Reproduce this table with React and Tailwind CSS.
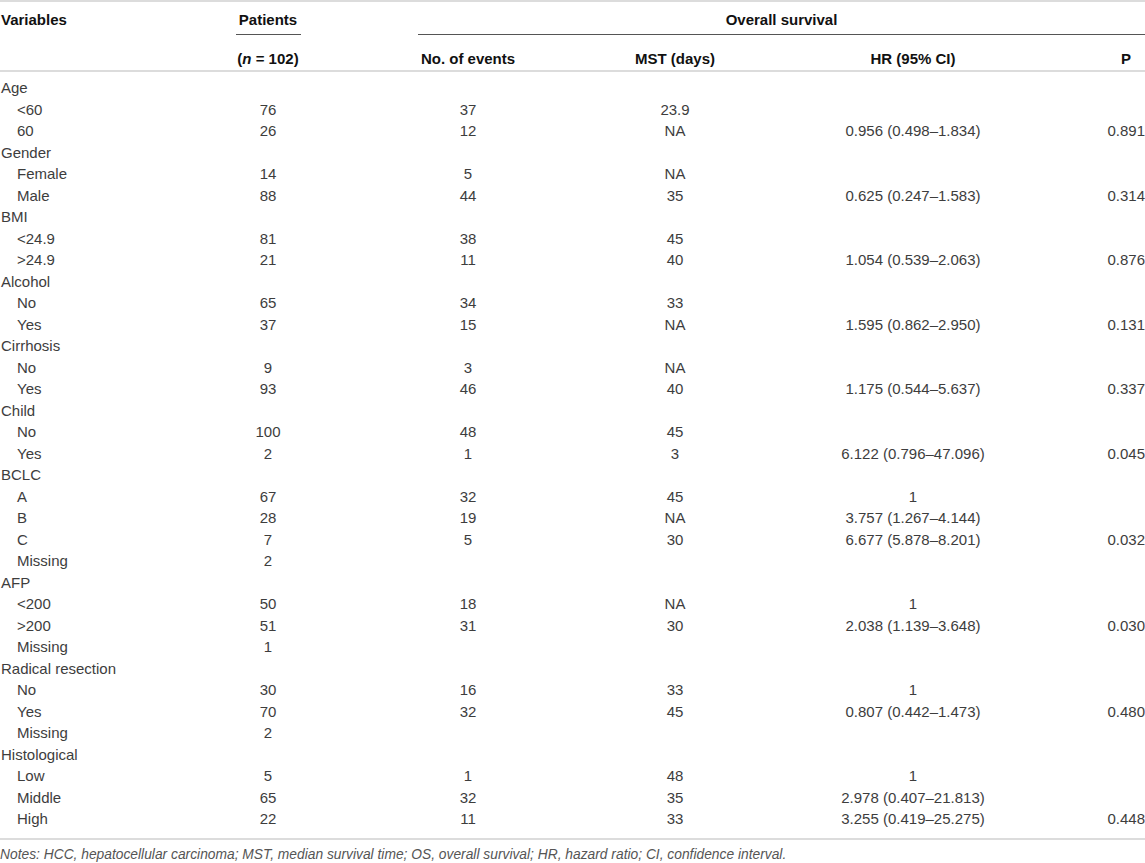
import React from 'react';

const cols = 'grid grid-cols-[220px_96px_304px_110px_366px_49px]';

const rows = [
  ['Age', 0],
  ['<60', 1, '76', '37', '23.9', '', ''],
  ['60', 1, '26', '12', 'NA', '0.956 (0.498–1.834)', '0.891'],
  ['Gender', 0],
  ['Female', 1, '14', '5', 'NA', '', ''],
  ['Male', 1, '88', '44', '35', '0.625 (0.247–1.583)', '0.314'],
  ['BMI', 0],
  ['<24.9', 1, '81', '38', '45', '', ''],
  ['>24.9', 1, '21', '11', '40', '1.054 (0.539–2.063)', '0.876'],
  ['Alcohol', 0],
  ['No', 1, '65', '34', '33', '', ''],
  ['Yes', 1, '37', '15', 'NA', '1.595 (0.862–2.950)', '0.131'],
  ['Cirrhosis', 0],
  ['No', 1, '9', '3', 'NA', '', ''],
  ['Yes', 1, '93', '46', '40', '1.175 (0.544–5.637)', '0.337'],
  ['Child', 0],
  ['No', 1, '100', '48', '45', '', ''],
  ['Yes', 1, '2', '1', '3', '6.122 (0.796–47.096)', '0.045'],
  ['BCLC', 0],
  ['A', 1, '67', '32', '45', '1', ''],
  ['B', 1, '28', '19', 'NA', '3.757 (1.267–4.144)', ''],
  ['C', 1, '7', '5', '30', '6.677 (5.878–8.201)', '0.032'],
  ['Missing', 1, '2', '', '', '', ''],
  ['AFP', 0],
  ['<200', 1, '50', '18', 'NA', '1', ''],
  ['>200', 1, '51', '31', '30', '2.038 (1.139–3.648)', '0.030'],
  ['Missing', 1, '1', '', '', '', ''],
  ['Radical resection', 0],
  ['No', 1, '30', '16', '33', '1', ''],
  ['Yes', 1, '70', '32', '45', '0.807 (0.442–1.473)', '0.480'],
  ['Missing', 1, '2', '', '', '', ''],
  ['Histological', 0],
  ['Low', 1, '5', '1', '48', '1', ''],
  ['Middle', 1, '65', '32', '35', '2.978 (0.407–21.813)', ''],
  ['High', 1, '22', '11', '33', '3.255 (0.419–25.275)', '0.448'],
];

export default function App() {
  return (
    <div className="w-[1145px] bg-white font-['Liberation_Sans',Arial,sans-serif] text-[15px] text-[#3d3d3d]">
      {/* header */}
      <div className="border-t-2 border-[#dcdcdc]">
        <div className={`${cols} font-bold text-[#111] leading-[18px]`}>
          <div className="pt-[9px] pb-[6px] pl-px">Variables</div>
          <div className="pt-[9px]">
            <div className="w-[65px] mx-auto text-center pb-[5px] border-b border-[#555]">Patients</div>
          </div>
          <div className="col-span-4 ml-[102px] pt-[9px] pb-[5px] text-center border-b border-[#555]">
            Overall survival
          </div>
        </div>
        <div className={`${cols} font-bold text-[#111] leading-[18px] pt-[15px] pb-[2px] border-b-2 border-[#dcdcdc] whitespace-nowrap`}>
          <div></div>
          <div className="text-center">
            (<span className="italic">n</span> = 102)
          </div>
          <div className="text-center">No. of events</div>
          <div className="text-center">MST (days)</div>
          <div className="text-center">HR (95% CI)</div>
          <div className="text-right pr-[14px]">P</div>
        </div>
      </div>

      {/* body */}
      <div className="pt-[5px] pb-[8px] border-b-2 border-[#dcdcdc] leading-[21.5px]">
        {rows.map((r, i) => (
          <div key={i} className={`${cols} whitespace-nowrap`}>
            <div className={r[1] ? 'pl-[17px]' : 'pl-px'}>{r[0]}</div>
            <div className="text-center">{r[2]}</div>
            <div className="text-center">{r[3]}</div>
            <div className="text-center">{r[4]}</div>
            <div className="text-center">{r[5]}</div>
            <div className="text-right">{r[6]}</div>
          </div>
        ))}
      </div>

      <p className="pt-[6px] italic text-[13.8px] leading-[18px] text-[#555]">
        Notes: HCC, hepatocellular carcinoma; MST, median survival time; OS, overall survival; HR, hazard ratio; CI, confidence interval.
      </p>
    </div>
  );
}
